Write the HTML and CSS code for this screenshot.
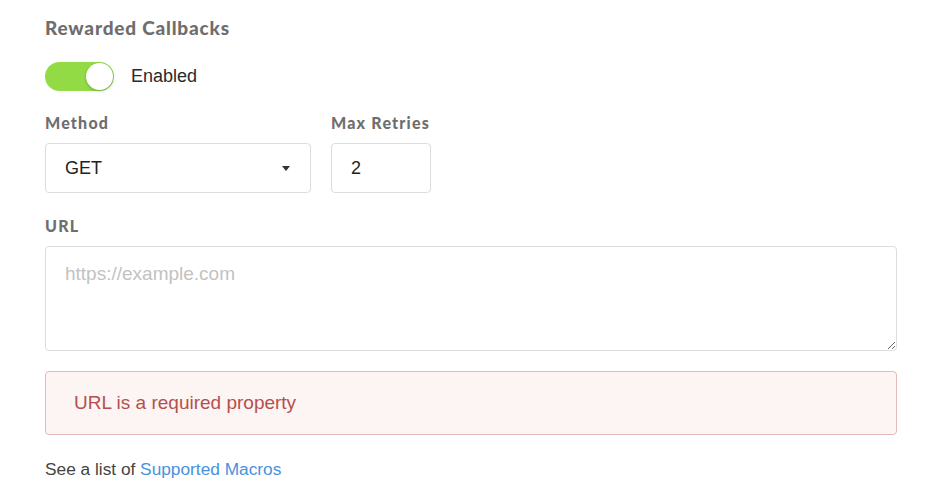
FILE: index.html
```html
<!DOCTYPE html>
<html lang="en">
<head>
    <meta charset="UTF-8">
    <meta name="viewport" content="width=device-width, initial-scale=1.0">
    <title>Rewarded Callbacks</title>
    <link rel="stylesheet" href="styles.css">
</head>
<body>
    <div class="callbacks">
        <h2 class="section-title">Rewarded Callbacks</h2>

        <div class="toggle-row">
            <span class="toggle on"><span class="knob"></span></span>
            <span class="toggle-label">Enabled</span>
        </div>

        <div class="field-row">
            <div class="field method">
                <label class="field-label" for="method">Method</label>
                <div class="select-wrap">
                    <select id="method" class="input">
                        <option>GET</option>
                        <option>POST</option>
                    </select>
                </div>
            </div>
            <div class="field retries">
                <label class="field-label" for="retries">Max Retries</label>
                <input id="retries" class="input" type="text" value="2">
            </div>
        </div>

        <div class="field url-field">
            <label class="field-label" for="url">URL</label>
            <textarea id="url" class="input url-input" placeholder="https://example.com"></textarea>
        </div>

        <div class="alert-error">URL is a required property</div>

        <p class="macros">See a list of <a href="#">Supported Macros</a></p>
    </div>
</body>
</html>
```

FILE: styles.css
```css
body {
    margin: 0;
    background: #fff;
    font-family: "Liberation Sans", Arial, sans-serif;
    color: #333;
}

.callbacks {
    display: flex;
    flex-direction: column;
    width: 852px;
    padding: 17px 0 0 45px;
}

.section-title {
    margin: 0;
    font-family: Lato, "Liberation Sans", sans-serif;
    font-weight: 900;
    font-size: 19px;
    line-height: 22px;
    letter-spacing: 0.8px;
    color: #6e6e6e;
}

.toggle-row {
    display: flex;
    align-items: center;
    gap: 17px;
    margin-top: 23px;
}

.toggle {
    display: flex;
    align-items: center;
    width: 69px;
    height: 29px;
    border-radius: 15px;
    background: #e5e5e5;
    box-sizing: border-box;
    padding: 1px;
}

.toggle.on {
    background: #93db45;
    justify-content: flex-end;
}

.knob {
    width: 27px;
    height: 27px;
    border-radius: 50%;
    background: #fff;
    box-shadow: 0 1px 3px rgba(0, 0, 0, 0.25);
}

.toggle-label {
    font-size: 18px;
    color: #2a2a2a;
}

.field-row {
    display: flex;
    gap: 20px;
    margin-top: 23px;
}

.field {
    display: flex;
    flex-direction: column;
}

.field-label {
    font-family: Lato, "Liberation Sans", sans-serif;
    font-weight: 900;
    font-size: 16px;
    line-height: 18px;
    letter-spacing: 1.2px;
    color: #6e6e6e;
    margin-bottom: 11px;
}

.input {
    box-sizing: border-box;
    height: 50px;
    border: 1px solid #ddd;
    border-radius: 4px;
    background: #fff;
    font-family: "Liberation Sans", Arial, sans-serif;
    font-size: 18px;
    color: #222;
    padding: 0 19px;
    outline: none;
}

.method {
    width: 266px;
}

.select-wrap {
    position: relative;
}

.select-wrap select {
    width: 100%;
    appearance: none;
    -webkit-appearance: none;
}

.select-wrap::after {
    content: "";
    position: absolute;
    right: 21px;
    top: 23px;
    border-left: 4px solid transparent;
    border-right: 4px solid transparent;
    border-top: 5px solid #333;
}

.retries {
    width: 100px;
}

.retries .input {
    width: 100%;
}

.url-field {
    margin-top: 24px;
}

.url-input {
    height: 105px;
    width: 100%;
    padding: 16px 19px;
    font-size: 19px;
    resize: vertical;
}

.url-input::placeholder {
    color: #c2c2c2;
}

.alert-error {
    display: flex;
    align-items: center;
    box-sizing: border-box;
    height: 64px;
    margin-top: 20px;
    padding: 0 28px;
    border: 1px solid #e6b9b9;
    border-radius: 4px;
    background: #fdf4f4;
    color: #b4504e;
    font-size: 19px;
}

.macros {
    margin: 24px 0 0;
    font-size: 17.3px;
    color: #444;
}

.macros a {
    color: #4a91dc;
    text-decoration: none;
}
```
